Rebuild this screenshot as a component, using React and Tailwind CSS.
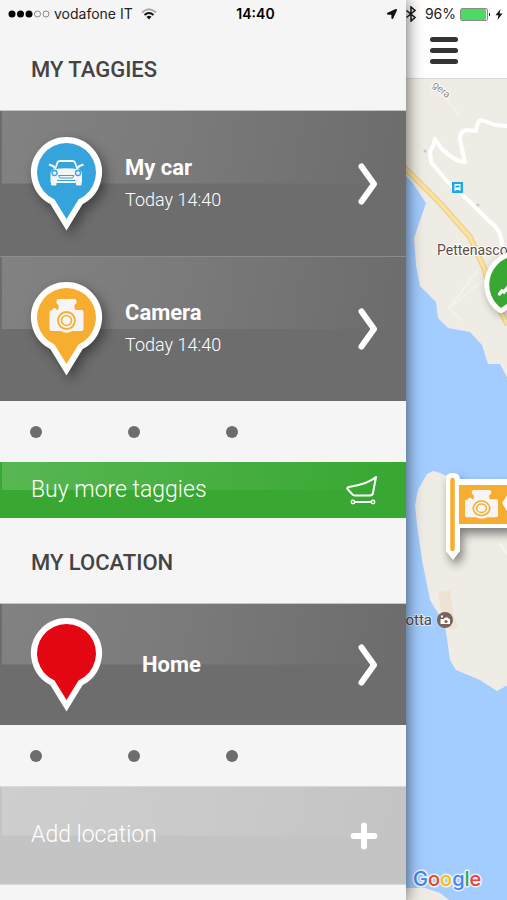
import { FaLocationArrow, FaBluetoothB, FaBolt } from "react-icons/fa";

const tags = [
  { name: "My car", seen: "Today 14:40", color: "#35a3dc", Glyph: CarGlyph },
  { name: "Camera", seen: "Today 14:40", color: "#f7ae30", Glyph: CameraGlyph },
];

function CarGlyph() {
  return (
    <g transform="translate(17 23)" fill="none" stroke="#f5f5f5" strokeLinejoin="round">
      <path d="M7 9.500 L9.500 2.500 Q10 1 12 1 H24.500 Q26.500 1 27 2.500 L29.500 9.500" strokeWidth="1.800" />
      <path d="M1 4.500 L5 6 L7 8 M35.500 4.500 L31.500 6 L29.500 8" strokeWidth="2.400" />
      <path d="M5 9.500 Q18 7 31.500 9.500 Q34 11.500 34 14 V21.500 Q34 23 32 23 H4.500 Q2.500 23 2.500 21.500 V14 Q2.500 11.500 5 9.500Z" fill="#f5f5f5" stroke="none" />
      <path d="M3.500 22 H8 V25 H3.500Z M28.500 22 H33 V25 H28.500Z" fill="#f5f5f5" strokeWidth="1" />
      <circle cx="6.500" cy="13" r="2.500" stroke="#35a3dc" strokeWidth="1.300" />
      <circle cx="30" cy="13" r="2.500" stroke="#35a3dc" strokeWidth="1.300" />
      <path d="M10.500 15.500 H26 L24.500 18 H12Z" stroke="#35a3dc" strokeWidth="1" />
      <path d="M9 20.500 H27.500" stroke="#35a3dc" strokeWidth="1" />
    </g>
  );
}

function CameraShape() {
  return (
    <>
      <path
        fill="#f5f5f5"
        d="M9 0 H25 Q27 0 27 2 V3.500 Q27 5 25.500 5.500 Q24 7 25 9 L26 11 H32 Q34 11 34 13 V30 Q34 32 32 32 H23 Q17 35.500 11 32 H2 Q0 32 0 30 V13 Q0 11.500 3 11 V10 Q5 8 7 10 V11 L8.500 11 Q10 7 8.500 5.500 Q7 5 7 3.500 V2 Q7 0 9 0Z"
      />
      <circle cx="17" cy="21.500" r="8.500" fill="none" stroke="#f7ae30" strokeWidth="1.800" />
      <circle cx="17" cy="21.500" r="5" fill="none" stroke="#f7ae30" strokeWidth="1.600" />
    </>
  );
}

function CameraGlyph() {
  return (
    <g transform="translate(18.500 17)">
      <CameraShape />
    </g>
  );
}

const Pin = ({ color, shadow, children }) => (
  <svg
    width="71"
    height="94"
    viewBox="0 0 71 94"
    className={shadow ? "shrink-0 overflow-visible drop-shadow-[4px_5px_6px_rgba(0,0,0,0.4)]" : "shrink-0 overflow-visible"}
  >
    <path
      d="M23.500 62.400 A29.500 29.500 0 1 1 47.500 62.400 L35.500 82Z"
      fill={color}
      stroke="#fff"
      strokeWidth="12"
      style={{ paintOrder: "stroke" }}
    />
    {children}
  </svg>
);

const Chevron = () => (
  <svg width="20" height="42" viewBox="0 0 20 42" className="ml-auto shrink-0">
    <path d="M3.500 3.500 L16 21 L3.500 38.500" fill="none" stroke="#fff" strokeWidth="6" strokeLinecap="round" strokeLinejoin="round" />
  </svg>
);

const rowGloss =
  "bg-[#6d6d6d] bg-[linear-gradient(100deg,#828282,#7a7a7a_45%,#6d6d6d_95%)] bg-size-[100%_50%] bg-position-[2px_0px] bg-no-repeat";

const Dots = () => (
  <div className="flex h-[61px] items-center gap-[86px] pl-[30px]">
    <span className="size-3 rounded-full bg-[#6d6d6d]" />
    <span className="size-3 rounded-full bg-[#6d6d6d]" />
    <span className="size-3 rounded-full bg-[#6d6d6d]" />
  </div>
);

const StatusBar = () => (
  <div className="absolute inset-x-0 top-0 z-20 grid h-7 grid-cols-[1fr_auto_1fr] items-center pr-1 pl-2 font-['Inter',sans-serif] text-sm text-[#222]">
    <div className="flex items-center gap-1">
      <svg width="42" height="8" viewBox="0 0 42 8">
        <circle cx="4" cy="4" r="3.500" />
        <circle cx="12.500" cy="4" r="3.500" />
        <circle cx="21" cy="4" r="3.500" />
        <circle cx="29.500" cy="4" r="3" fill="none" stroke="#888" />
        <circle cx="38" cy="4" r="3" fill="none" stroke="#888" />
      </svg>
      <span>vodafone IT</span>
      <svg width="16" height="12" viewBox="0 0 16 12" fill="none" strokeWidth="1.800" className="ml-1">
        <path d="M1 4.500 Q8 -2 15 4.500" stroke="#aaa" />
        <path d="M3.500 7 Q8 3 12.500 7" stroke="#111" />
        <path d="M5.500 8.800 Q8 6.800 10.500 8.800 L8 11.500Z" fill="#111" stroke="none" />
      </svg>
    </div>
    <span className="font-semibold text-black">14:40</span>
    <div className="flex items-center justify-end gap-1">
      <FaLocationArrow size={10} color="#111" />
      <svg width="12" height="16" viewBox="0 0 12 16" fill="none" stroke="#111" strokeWidth="1.500" className="ml-1">
        <path d="M1.500 4.500 L10 11.500 L6 15 V1 L10 4.500 L1.500 11.500" />
      </svg>
      <span className="ml-1">96%</span>
      <svg width="31" height="13" viewBox="0 0 31 13">
        <rect x="0.500" y="0.500" width="27" height="12" rx="1.500" fill="#fff" stroke="#8d8d8d" />
        <rect x="1" y="1" width="25" height="11" rx="1" fill="#4cd964" />
        <path d="M29 4.500 Q31 6.500 29 8.500Z" />
      </svg>
      <svg width="8" height="11" viewBox="0 0 8 11">
        <path d="M5.500 0 L0.500 6.200 H3.500 L2.500 11 L7.500 4.500 H4.500Z" fill="#111" />
      </svg>
    </div>
  </div>
);

const Drawer = () => (
  <nav className="relative z-10 w-4/5 shrink-0 bg-[#f5f5f5] shadow-[0_0_16px_rgba(0,0,0,0.65)]">
    <h2 className="flex h-[111px] items-center border-b border-[#c4c4c4] pt-7 pl-[31px] text-[22px] font-medium text-[#444]">
      MY TAGGIES
    </h2>
    {tags.map(({ name, seen, color, Glyph }, i) => (
      <button
        key={name}
        className={`flex h-[145px] w-full items-center gap-[23px] pr-7 pl-[31px] text-left text-white ${rowGloss} ${i > 0 ? "border-t border-[#8c8c8c]" : ""}`}
      >
        <Pin color={color} shadow>
          <Glyph />
        </Pin>
        <span>
          <span className="block text-[22px] leading-8 font-bold">{name}</span>
          <span className="block text-lg leading-8 font-light">{seen}</span>
        </span>
        <Chevron />
      </button>
    ))}
    <Dots />
    <button className="flex h-14 w-full items-center justify-between bg-[#38a832] bg-[linear-gradient(100deg,#58b752,#48af42_50%,#38a832_95%)] bg-size-[100%_50%] bg-position-[2px_0px] bg-no-repeat pr-7 pl-[31px] text-[23px] font-light text-white">
      Buy more taggies
      <svg width="33" height="30" viewBox="0 0 33 30" fill="none" stroke="#fff" strokeWidth="2" strokeLinejoin="round">
        <path d="M31 2 L28 18 Q27.500 20.500 25 20.500 H10 Q8 20.500 7 19 L2.500 14 Q1.500 12.500 4 12 Q23 9 31 2Z" />
        <circle cx="8" cy="27" r="1.700" strokeWidth="1.500" />
        <circle cx="28" cy="27" r="1.700" strokeWidth="1.500" />
        <path d="M10 27 H26" />
      </svg>
    </button>
    <h2 className="flex h-[86px] items-center border-b border-[#c4c4c4] pt-1 pl-[31px] text-[22px] font-medium text-[#444]">
      MY LOCATION
    </h2>
    <button className={`flex h-[121px] w-full items-center gap-10 pr-7 pl-[31px] text-left text-white ${rowGloss}`}>
      <Pin color="#e30613" />
      <span className="text-[22px] leading-8 font-bold">Home</span>
      <Chevron />
    </button>
    <Dots />
    <button className="flex h-[99px] w-full items-center justify-between border-y border-[#d8d8d8] bg-[#c4c4c4] bg-[linear-gradient(100deg,#cecece,#cacaca_50%,#c4c4c4_95%)] bg-size-[100%_50%] bg-position-[2px_0px] bg-no-repeat pr-7 pl-[31px] text-[23px] font-light text-white">
      Add location
      <svg width="28" height="28" viewBox="0 0 28 28">
        <path d="M14 3.500 V24.500 M3.500 14 H24.500" stroke="#fff" strokeWidth="6" strokeLinecap="round" />
      </svg>
    </button>
  </nav>
);

const LakeMap = () => (
  <svg viewBox="406 79 102 821" preserveAspectRatio="xMinYMin slice" className="min-h-0 w-full flex-1 bg-[#a3ccff]" fontFamily="Roboto, sans-serif">
    <g fill="#efece5">
      <path d="M406 78 H508 V379 L500 364 H488 L482 345 L470 332 L448 328 L438 318 L436 302 L420 286 L416 265 L414 238 L426 203 L412 182 L406 176Z" />
      <path d="M433 471 L427 474 L418 490 L415 505 L417 525 L422 560 L430 600 L445 625 L450 660 L456 670 L480 680 L497 691 L508 685 V500 L470 486 L440 473Z" />
      <path d="M406 888 H425 L440 893 L449 900 H406Z" />
    </g>
    <path d="M438 592 L450 590 L453 612 L458 628 L450 630 L442 614Z" fill="#eee2d2" />

    {/* roads */}
    <g fill="none" strokeLinejoin="round">
      <path d="M478 270 L449 308 L462 320 M449 308 L484 280 M446 98 L460 116" stroke="#f5f3ee" strokeWidth="1.500" />
      <path d="M404 167 L440 203 L470 237 L484 268 L492 295 L508 325" stroke="#ecd394" strokeWidth="6" />
      <path d="M404 167 L440 203 L470 237 L484 268 L492 295 L508 325" stroke="#fbe3a0" strokeWidth="3" />
      <path
        d="M508 126 L495 125 L482 120 Q477 120 476 131 L466 130 Q459 132 460 140 L465 162 Q455 162 441 148 L435 139 Q434 146 430 152 L431 162 L446 180 L470 202 L490 222 Q502 230 502 246"
        stroke="#fff"
        strokeWidth="4"
      />
      <path d="M499 543 L508 555" stroke="#f9f8f5" strokeWidth="1.500" />
    </g>
    <circle cx="425" cy="151" r="1.500" fill="#cbc8c2" />
    <circle cx="478" cy="205" r="1.500" fill="#cbc8c2" />

    <g transform="translate(452 182)">
      <rect width="11" height="11" fill="#1da9e8" />
      <path d="M2.500 2 H8.500 V9 H7.500 V8 H3.500 V9 H2.500Z" fill="#fff" />
      <path d="M3.500 3.500 H7.500 V5.500 H3.500Z" fill="#1da9e8" />
    </g>

    <text transform="translate(432 86) rotate(40)" fontSize="10" fill="#8f8b85" stroke="#fff" strokeWidth="2" paintOrder="stroke">
      gera
    </text>
    <text x="437" y="255" fontSize="14" fill="#5b4d46" stroke="#fff" strokeWidth="2" paintOrder="stroke">
      Pettenasco
    </text>
    <text x="432" y="625" fontSize="15" textAnchor="end" fill="#4f4a48" stroke="#dbe9fb" strokeWidth="2" paintOrder="stroke">
      otta
    </text>
    <g transform="translate(445 620)">
      <circle r="8" fill="#7a625a" />
      <path d="M-4.500 -1 H-1 L0 -2.500 H3 L4 -1 H5 V4 H-4.500Z M-4 -4.500 H-2 V-2.500 H-4Z" fill="#fff" />
      <circle cx="1" cy="1.500" r="1.600" fill="#7a625a" />
    </g>

    {/* tag markers */}
    <g className="drop-shadow-[2px_3px_4px_rgba(0,0,0,0.3)]">
      <path d="M501 308 A29 29 0 0 1 514 256 H524 V292Z" fill="#38a832" stroke="#fff" strokeWidth="10" paintOrder="stroke" strokeLinejoin="round" />
      <path d="M499.500 294 L502 291 L504 292 L512 282" fill="none" stroke="#fff" strokeWidth="3.500" strokeLinecap="round" />
    </g>
    <g className="drop-shadow-[3px_6px_5px_rgba(0,0,0,0.45)]">
      <path d="M446 478 Q446 473 453 473 Q460 473 460 479 H512 V528 H460 V551 L453 560 L446 551Z" fill="#fff" />
      <path d="M459 485 H512 V524 H459Z" fill="#f7ae30" />
      <path d="M452.500 480 V549" stroke="#f7ae30" strokeWidth="4.500" strokeLinecap="round" />
      <g transform="translate(465 490) scale(0.970 0.850)">
        <CameraShape />
      </g>
      <path d="M503 503 L509 494 V513Z" fill="#fff" stroke="#fff" strokeWidth="1.500" strokeLinejoin="round" />
    </g>

    <text x="413" y="886" fontSize="20" fontFamily="Inter, sans-serif" fontWeight="500" stroke="#e6f0fd" strokeWidth="3" paintOrder="stroke" strokeLinejoin="round">
      <tspan fill="#4285f4">G</tspan>
      <tspan fill="#ea4335">o</tspan>
      <tspan fill="#fbbc05">o</tspan>
      <tspan fill="#4285f4">g</tspan>
      <tspan fill="#34a853">l</tspan>
      <tspan fill="#ea4335">e</tspan>
    </text>
  </svg>
);

export default function App() {
  return (
    <div className="relative flex h-screen overflow-hidden bg-[#f5f5f5] font-['Roboto',sans-serif]">
      <StatusBar />
      <Drawer />
      <main className="flex min-w-0 flex-1 flex-col">
        <header className="h-[79px] shrink-0 border-b border-[#d9d9d9] bg-white pt-9 pl-6">
          <button aria-label="Menu" className="flex w-7 flex-col gap-1.5 py-px">
            <span className="h-[5px] rounded-full bg-[#333]" />
            <span className="h-[5px] rounded-full bg-[#333]" />
            <span className="h-[5px] rounded-full bg-[#333]" />
          </button>
        </header>
        <LakeMap />
      </main>
    </div>
  );
}
